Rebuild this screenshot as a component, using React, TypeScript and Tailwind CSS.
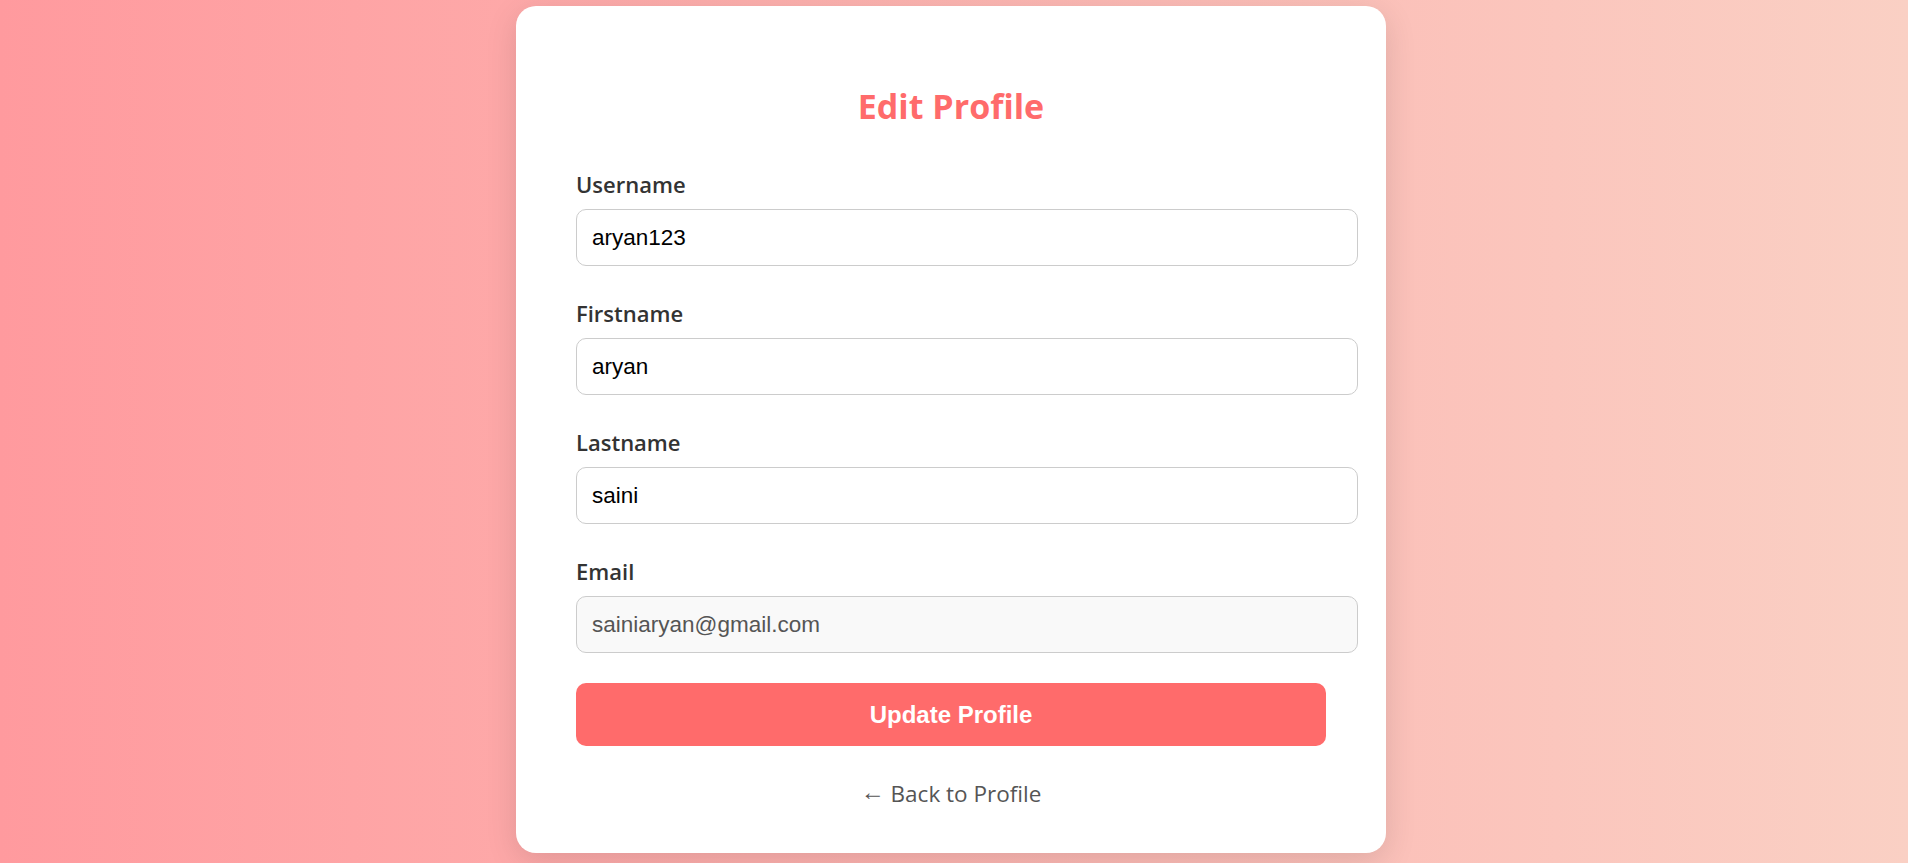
import { useState } from 'react';

const fields = [
  { name: 'username', label: 'Username', value: 'aryan123' },
  { name: 'firstname', label: 'Firstname', value: 'aryan' },
  { name: 'lastname', label: 'Lastname', value: 'saini' },
];

const EditProfile = () => {
  const [form, setForm] = useState<Record<string, string>>({
    username: 'aryan123',
    firstname: 'aryan',
    lastname: 'saini',
  });

  const handleChange = (e: React.ChangeEvent<HTMLInputElement>) => {
    setForm({ ...form, [e.target.name]: e.target.value });
  };

  return (
    <div className="w-full h-screen overflow-hidden bg-[linear-gradient(to_right,#ff9a9e,#fad0c4)] flex justify-center pt-[6px] pr-[6px] font-['Open_Sans',sans-serif]">
      <div className="w-[870px] h-[847px] bg-white rounded-[20px] shadow-[0_8px_32px_rgba(0,0,0,0.12)] px-[60px] pt-[80px] pb-[46px] flex flex-col">
        <h2 className="text-[34px] leading-[40px] font-bold text-[#ff6b6b] text-center">Edit Profile</h2>

        <form className="flex flex-col mt-[43px]" onSubmit={(e) => e.preventDefault()}>
          {fields.map((f) => (
            <div key={f.name} className="flex flex-col mb-[32px]">
              <label className="text-[22px] leading-[30px] font-semibold text-[#333]">{f.label}</label>
              <input
                name={f.name}
                value={form[f.name]}
                onChange={handleChange}
                className="box-content w-full mt-[10px] h-[25px] p-[15px] border border-[#ccc] rounded-[10px] bg-white text-black text-[22.5px] leading-[25px] font-['Liberation_Sans',Arial,sans-serif] outline-none"
              />
            </div>
          ))}
          <div className="flex flex-col">
            <label className="text-[22px] leading-[30px] font-semibold text-[#333]">Email</label>
            <input
              value="sainiaryan@gmail.com"
              readOnly
              className="box-content w-full mt-[10px] h-[25px] p-[15px] border border-[#ccc] rounded-[10px] bg-[#f9f9f9] text-[#555] text-[22.5px] leading-[25px] font-['Liberation_Sans',Arial,sans-serif] outline-none"
            />
          </div>
          <button
            type="submit"
            className="mt-[30px] h-[63px] w-full rounded-[10px] bg-[#ff6b6b] text-white text-[24px] font-bold font-['Liberation_Sans',Arial,sans-serif]"
          >
            Update Profile
          </button>
        </form>

        <a href="#" className="mt-[32px] text-center text-[22.5px] leading-[30px] text-[#555]">
          <span className="inline-block relative -top-[2px] text-[24px] leading-[30px]">←</span> Back to Profile
        </a>
      </div>
    </div>
  );
};

export default function App() {
  return <EditProfile />;
}
